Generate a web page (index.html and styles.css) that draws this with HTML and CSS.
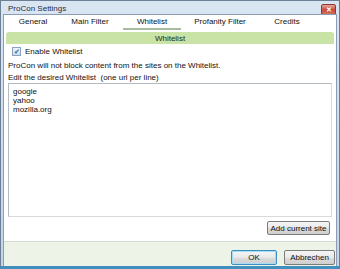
FILE: index.html
```html
<!DOCTYPE html>
<html lang="de">
<head>
  <meta charset="UTF-8" />
  <title>ProCon Settings</title>
  <link rel="stylesheet" href="styles.css">
</head>
<body>

<div class="window">
  <div class="titlebar">
    <span class="title">ProCon Settings</span>
    <span class="close">&#x2715;</span>
  </div>

  <div class="client">
    <nav class="tabs">
      <span class="tab">General</span>
      <span class="tab">Main Filter</span>
      <span class="tab active">Whitelist</span>
      <span class="tab">Profanity Filter</span>
      <span class="tab">Credits</span>
    </nav>

    <div class="panel">
      <div class="section-head">Whitelist</div>

      <label class="check-row">
        <span class="checkbox">&#x2714;</span>
        Enable Whitelist
      </label>

      <p class="note">ProCon will not block content from the sites on the Whitelist.</p>
      <p class="note">Edit the desired Whitelist&nbsp; (one url per line)</p>

      <div class="list-box">
        <div>google</div>
        <div>yahoo</div>
        <div>mozilla.org</div>
      </div>

      <div class="panel-actions">
        <button class="btn">Add current site</button>
      </div>
    </div>

    <div class="footer">
      <button class="btn btn-ok">OK</button>
      <button class="btn btn-cancel">Abbrechen</button>
    </div>
  </div>
</div>

</body>
</html>
```

FILE: styles.css
```css
* {
  box-sizing: border-box;
}

body {
  margin: 0;
  font-family: 'Liberation Sans', Arial, sans-serif;
  font-size: 8px;
  color: #111111;
  background: #ffffff;
}

.window {
  width: 340px;
  height: 269px;
  display: flex;
  flex-direction: column;
  background: linear-gradient(180deg, #dae5f2 0%, #c2d5ea 100%);
  border: 1px solid #6d7f94;
  border-bottom: 3px solid #3f8fbf;
}

.titlebar {
  height: 13px;
  display: flex;
  align-items: center;
  justify-content: space-between;
  padding: 1px 3px 0 7px;
  flex-shrink: 0;
}

.title {
  font-size: 8px;
  color: #1f2d3d;
}

.close {
  width: 15px;
  height: 11px;
  margin-top: 3px;
  display: flex;
  align-items: center;
  justify-content: center;
  font-size: 7px;
  font-weight: bold;
  color: #ffffff;
  background: linear-gradient(180deg, #e6a79b 0%, #c8483a 55%, #d9705d 100%);
  border: 1px solid #8b3a32;
  border-radius: 2px;
}

.client {
  flex: 1;
  display: flex;
  flex-direction: column;
  margin: 0 2px;
  background: #eef3e8;
  border: 1px solid #8a9db3;
  border-bottom: none;
}

.tabs {
  height: 15px;
  display: flex;
  align-items: stretch;
  background: #ffffff;
  padding-left: 5px;
  flex-shrink: 0;
}

.tab {
  display: flex;
  align-items: center;
  justify-content: center;
  font-size: 8px;
  border-bottom: 2px solid transparent;
}

.tab:nth-child(1) { width: 48px; }
.tab:nth-child(2) { width: 66px; }
.tab:nth-child(3) { width: 58px; }
.tab:nth-child(4) { width: 78px; }
.tab:nth-child(5) { width: 56px; }

.tab.active {
  border-bottom-color: #a9bca0;
}

.panel {
  flex: 1;
  display: flex;
  flex-direction: column;
  background: #ffffff;
  border-bottom: 1px solid #d6dcd2;
  padding: 2px 2px 6px 2px;
}

.section-head {
  height: 12px;
  flex-shrink: 0;
  display: flex;
  align-items: center;
  justify-content: center;
  font-size: 8px;
  background: #c9e3a6;
  border-radius: 3px 3px 0 0;
  color: #1e2a10;
}

.check-row {
  display: flex;
  align-items: center;
  gap: 4px;
  margin: 3px 0 0 6px;
  height: 9px;
}

.checkbox {
  width: 9px;
  height: 9px;
  display: flex;
  align-items: center;
  justify-content: center;
  font-size: 7px;
  color: #3b5f9c;
  background: linear-gradient(180deg, #eef3fa 0%, #cfdcee 100%);
  border: 1px solid #8da2c1;
}

.note {
  margin: 5px 0 0 2px;
  line-height: 9px;
}

.note + .note {
  margin-top: 3px;
}

.list-box {
  flex: 1;
  margin: 1px 2px 0 2px;
  padding: 3px 4px;
  line-height: 9px;
  border: 1px solid #b5bcc2;
  border-right-color: #d7dbde;
  border-bottom-color: #d7dbde;
}

.panel-actions {
  display: flex;
  justify-content: flex-end;
  padding: 4px 4px 0 0;
}

.panel-actions .btn {
  width: 63px;
}

.btn {
  height: 14px;
  padding: 0 2px;
  white-space: nowrap;
  font-family: 'Liberation Sans', Arial, sans-serif;
  font-size: 8px;
  color: #111111;
  background: linear-gradient(180deg, #f6f6f6 0%, #e8e8e8 50%, #dcdcdc 51%, #cfcfcf 100%);
  border: 1px solid #7c7c7c;
  border-radius: 2px;
}

.footer {
  height: 24px;
  display: flex;
  justify-content: flex-end;
  align-items: flex-end;
  gap: 7px;
  padding: 0 1px 1px 0;
  flex-shrink: 0;
}

.footer .btn {
  height: 15px;
}

.btn-ok {
  width: 46px;
  border-color: #3c8fc2;
  box-shadow: inset 0 0 0 1px #a8dcf5;
}

.btn-cancel {
  width: 51px;
}
```
